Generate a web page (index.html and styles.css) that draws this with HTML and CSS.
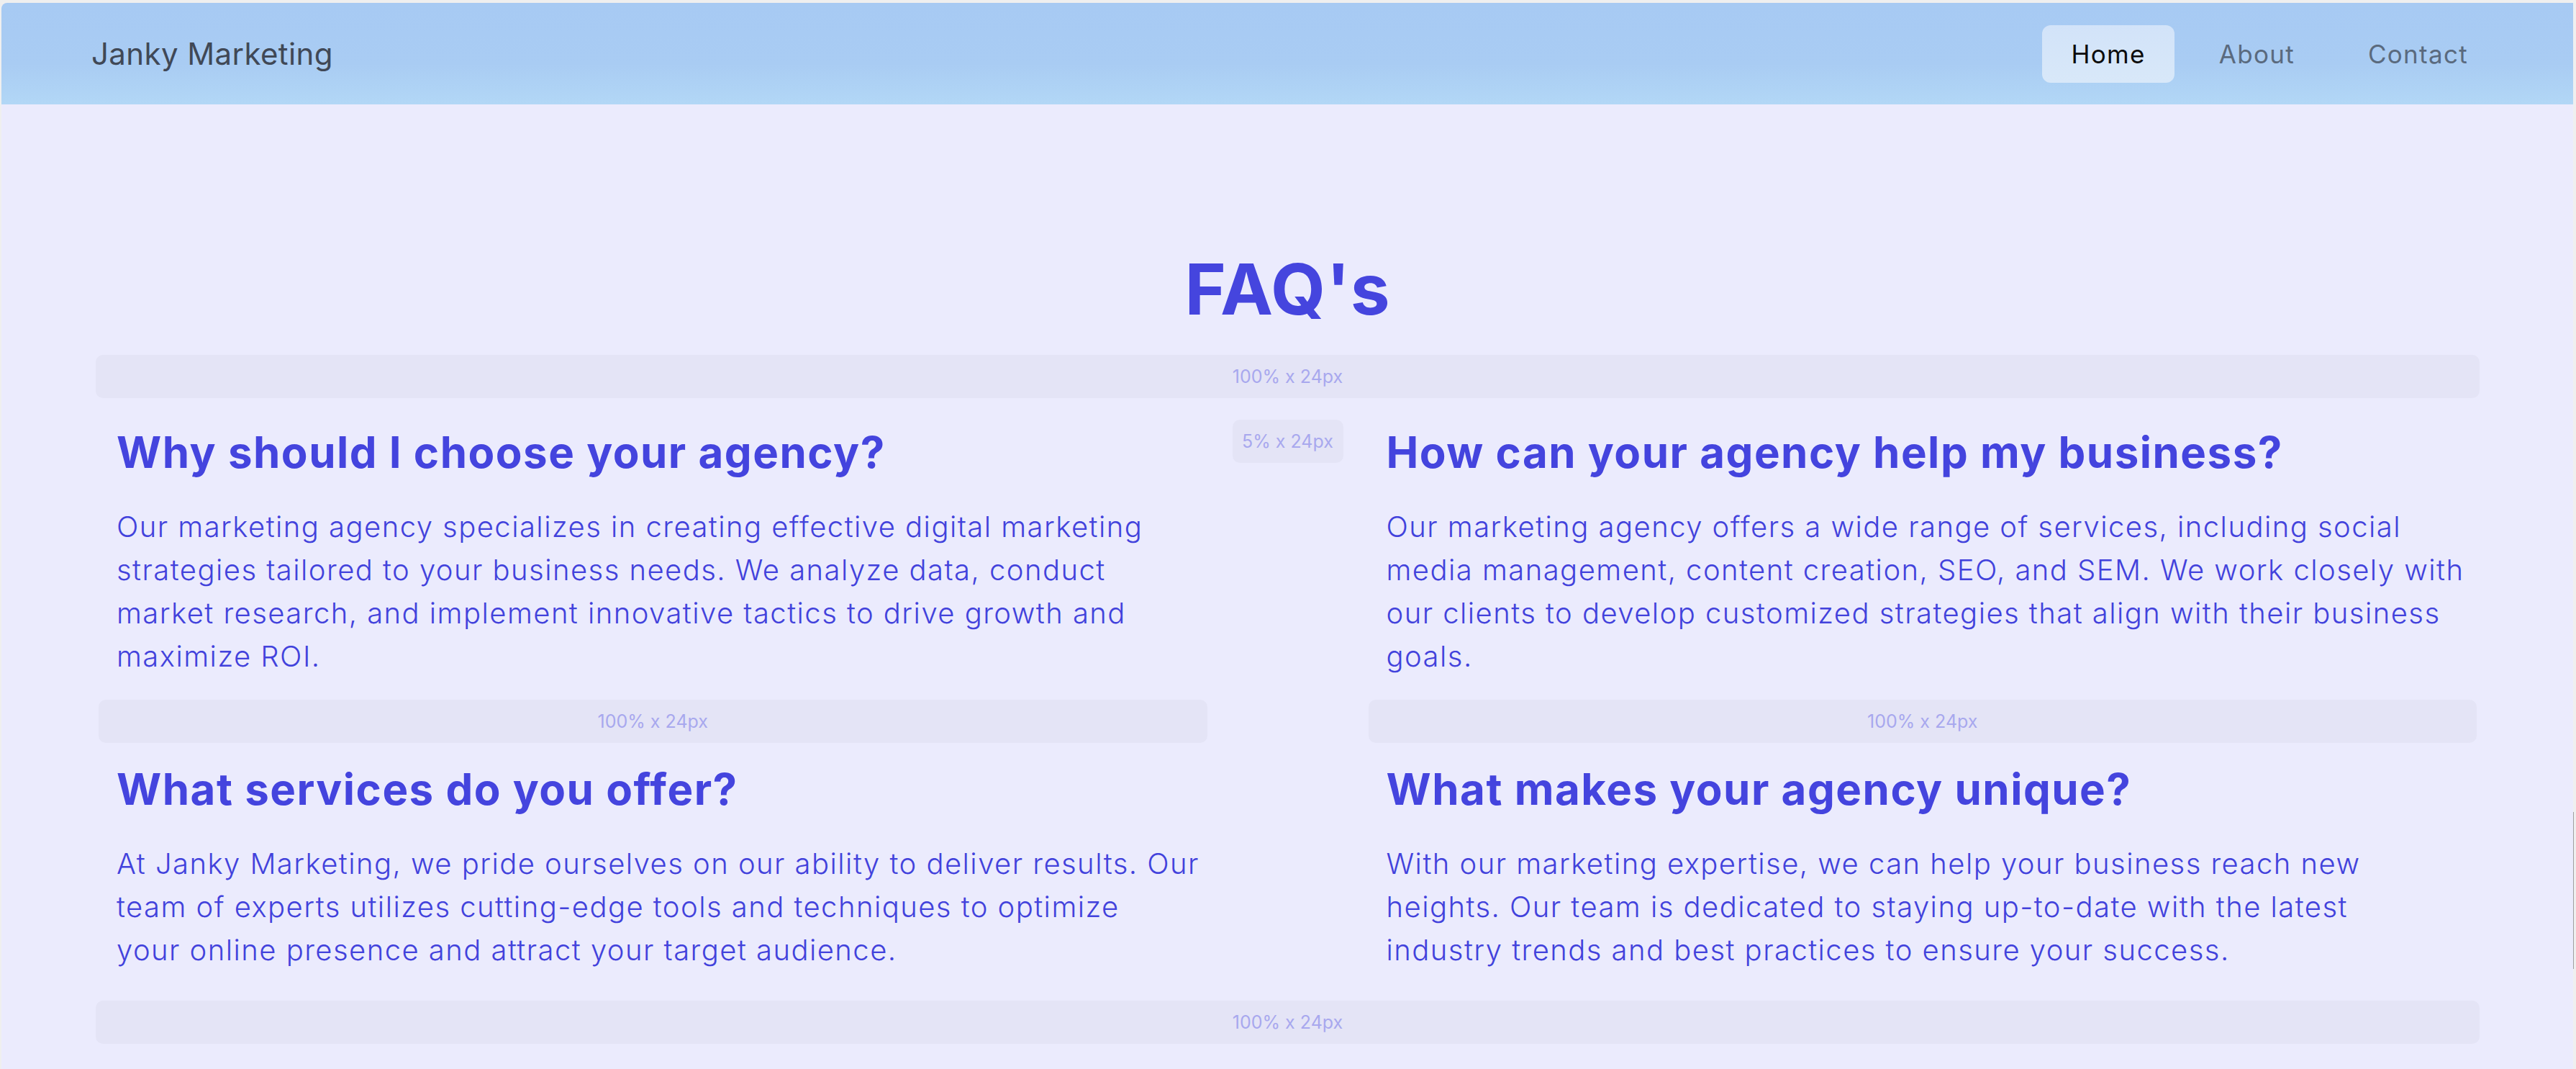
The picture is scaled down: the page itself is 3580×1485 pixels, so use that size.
FILE: index.html
```html
<!DOCTYPE html>
<html lang="en">
<head>
<meta charset="utf-8">
<title>Janky Marketing – FAQ's</title>
<link rel="stylesheet" href="styles.css">
</head>
<body>
<div class="frame">
  <header class="nav">
    <div class="logo">Janky Marketing</div>
    <nav class="links">
      <a class="link active" href="#">Home</a>
      <a class="link" href="#">About</a>
      <a class="link" href="#">Contact</a>
    </nav>
  </header>
  <main class="main">
    <h1 class="title">FAQ's</h1>
    <div class="ph">100% x 24px</div>
    <div class="row">
      <div class="col">
        <h2 class="q">Why should I choose your agency?</h2>
        <p class="a">Our marketing agency specializes in creating effective digital marketing<br>strategies tailored to your business needs. We analyze data, conduct<br>market research, and implement innovative tactics to drive growth and<br>maximize ROI.</p>
        <div class="ph ph-mid">100% x 24px</div>
        <h2 class="q q2">What services do you offer?</h2>
        <p class="a">At Janky Marketing, we pride ourselves on our ability to deliver results. Our<br>team of experts utilizes cutting-edge tools and techniques to optimize<br>your online presence and attract your target audience.</p>
      </div>
      <div class="spacer"><div class="ph">5% x 24px</div></div>
      <div class="col">
        <h2 class="q">How can your agency help my business?</h2>
        <p class="a">Our marketing agency offers a wide range of services, including social<br>media management, content creation, SEO, and SEM. We work closely with<br>our clients to develop customized strategies that align with their business<br>goals.</p>
        <div class="ph ph-mid">100% x 24px</div>
        <h2 class="q q2">What makes your agency unique?</h2>
        <p class="a">With our marketing expertise, we can help your business reach new<br>heights. Our team is dedicated to staying up-to-date with the latest<br>industry trends and best practices to ensure your success.</p>
      </div>
    </div>
    <div class="ph ph-bottom">100% x 24px</div>
  </main>
</div>
<div class="scroll-thumb"></div>
</body>
</html>
```
FILE: styles.css
```css
* { box-sizing: border-box; }
html, body { margin: 0; padding: 0; }
body {
  background: #efefef;
  font-family: Inter, "Noto Sans", sans-serif;
  overflow: hidden;
}
.frame {
  margin: 4px 4px 0 2px;
  min-height: 1481px;
  background: #ebebfd;
  border-top-left-radius: 8px;
  overflow: hidden;
}
.nav {
  height: 141px;
  display: flex;
  align-items: center;
  justify-content: space-between;
  padding: 0 106px 0 125px;
  background: linear-gradient(180deg, #a7caf3 0%, #a9ccf3 60%, #b2d7f6 100%);
}
.logo {
  font-size: 42px;
  font-weight: 400;
  letter-spacing: 0.4px;
  color: #404856;
}
.links {
  display: flex;
  gap: 22px;
}
.link {
  display: block;
  height: 80px;
  line-height: 80px;
  padding: 0 40px;
  border-radius: 12px;
  font-size: 35px;
  font-weight: 400;
  letter-spacing: 1.3px;
  color: #5a6a7e;
  text-decoration: none;
}
.link.active {
  background: linear-gradient(180deg, #d2e3f9, #d8e8f9);
  color: #0b0b0b;
}
.main {
  padding: 182px 130px 0 131px;
}
.title {
  margin: 0 0 16px;
  text-align: center;
  font-size: 98px;
  line-height: 150px;
  font-weight: 700;
  letter-spacing: 1px;
  color: #4545de;
}
.ph {
  height: 60px;
  border-radius: 10px;
  background: #e4e4f6;
  display: flex;
  align-items: center;
  justify-content: center;
  font-size: 25px;
  color: #a8a8ee;
}
.row {
  display: grid;
  grid-template-columns: 1fr 154px 1fr;
  column-gap: 35px;
  padding: 30px 4px 0;
}
.col {
  display: flex;
  flex-direction: column;
}
.q {
  margin: 5px 0 0;
  padding: 0 25px;
  font-size: 60px;
  line-height: 80px;
  font-weight: 700;
  letter-spacing: 1.5px;
  color: #4444de;
}
.q2 { margin-top: 24px; }
.a {
  margin: 34px 0 0;
  padding: 0 0 0 25px;
  font-size: 40px;
  line-height: 60px;
  font-weight: 300;
  letter-spacing: 1.45px;
  color: #4242dc;
}
.ph-mid { margin-top: 30px; }
.ph-bottom { margin-top: 40px; }
.scroll-thumb {
  position: fixed;
  left: 3576px;
  top: 1128px;
  width: 1px;
  height: 218px;
  background: #a0a0a0;
}
```
